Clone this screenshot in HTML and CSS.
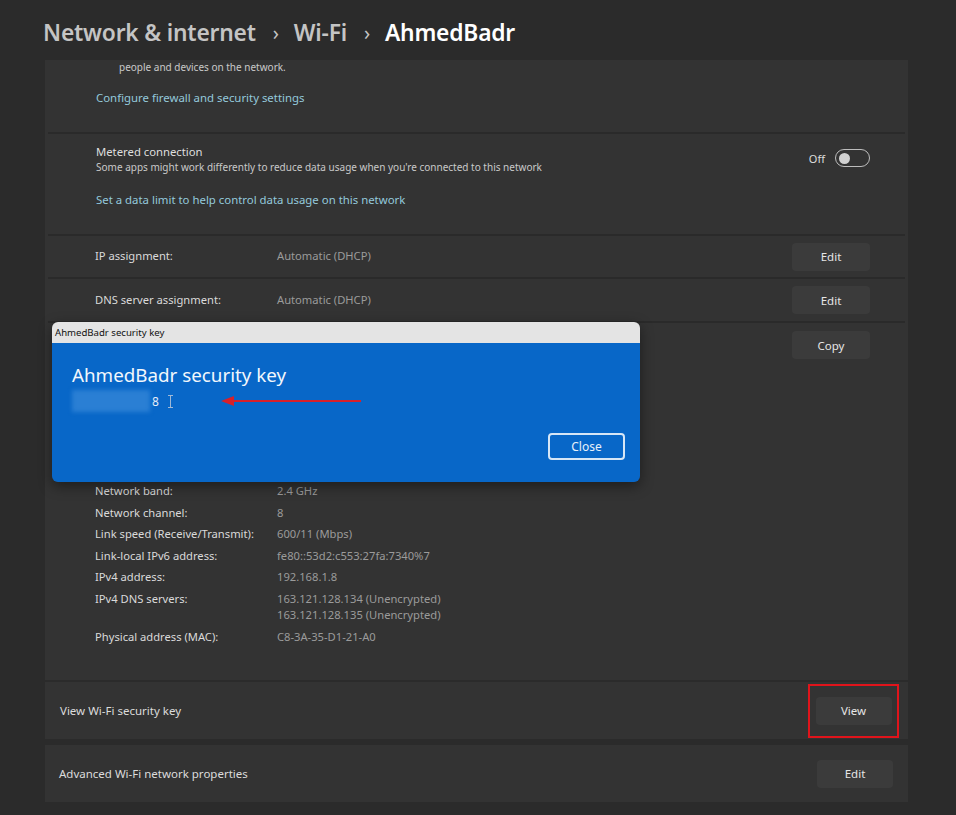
FILE: index.html
```html
<!DOCTYPE html>
<html lang="en">
<head>
<meta charset="utf-8">
<title>AhmedBadr - Wi-Fi</title>
<link rel="stylesheet" href="styles.css">
</head>
<body>
<div class="page">
  <header class="crumbs">
    <span class="crumb">Network &amp; internet</span>
    <span class="sep">›</span>
    <span class="crumb">Wi-Fi</span>
    <span class="sep">›</span>
    <span class="crumb current">AhmedBadr</span>
  </header>

  <main class="content">
    <section class="panel">
      <div class="group firewall">
        <p class="desc indent">people and devices on the network.</p>
        <a class="link">Configure firewall and security settings</a>
      </div>
      <div class="divider"></div>

      <div class="group metered">
        <div class="metered-head">
          <div class="metered-text">
            <div class="title">Metered connection</div>
            <div class="desc">Some apps might work differently to reduce data usage when you're connected to this network</div>
          </div>
          <div class="toggle-wrap">
            <span class="toggle-label">Off</span>
            <span class="toggle"><span class="knob"></span></span>
          </div>
        </div>
        <a class="link link-gap">Set a data limit to help control data usage on this network</a>
      </div>
      <div class="divider"></div>

      <div class="row row-ip">
        <span class="label">IP assignment:</span>
        <span class="value">Automatic (DHCP)</span>
        <button class="btn">Edit</button>
      </div>
      <div class="divider"></div>

      <div class="row row-dns">
        <span class="label">DNS server assignment:</span>
        <span class="value">Automatic (DHCP)</span>
        <button class="btn">Edit</button>
      </div>
      <div class="divider"></div>

      <div class="props">
        <div class="prop-head">
          <span class="label">SSID:</span>
          <span class="value">AhmedBadr</span>
          <button class="btn">Copy</button>
        </div>
        <div class="prop-list">
          <div class="prop"><span class="label">Protocol:</span><span class="value">Wi-Fi 4 (802.11n)</span></div>
          <div class="prop"><span class="label">Security type:</span><span class="value">WPA2-Personal</span></div>
          <div class="prop"><span class="label">Manufacturer:</span><span class="value">Intel Corporation</span></div>
          <div class="prop"><span class="label">Description:</span><span class="value">Intel(R) Wi-Fi 6 AX201 160MHz</span></div>
          <div class="prop"><span class="label">Driver version:</span><span class="value">22.110.1.1</span></div>
          <div class="prop"><span class="label">Network band:</span><span class="value">2.4 GHz</span></div>
          <div class="prop"><span class="label">Network channel:</span><span class="value">8</span></div>
          <div class="prop"><span class="label">Link speed (Receive/Transmit):</span><span class="value">600/11 (Mbps)</span></div>
          <div class="prop"><span class="label">Link-local IPv6 address:</span><span class="value">fe80::53d2:c553:27fa:7340%7</span></div>
          <div class="prop"><span class="label">IPv4 address:</span><span class="value">192.168.1.8</span></div>
          <div class="prop"><span class="label">IPv4 DNS servers:</span><span class="value">163.121.128.134 (Unencrypted)<br>163.121.128.135 (Unencrypted)</span></div>
          <div class="prop"><span class="label">Physical address (MAC):</span><span class="value">C8-3A-35-D1-21-A0</span></div>
        </div>
      </div>
    </section>

    <section class="card card-view">
      <span class="card-label">View Wi-Fi security key</span>
      <span class="highlight"><button class="btn btn-card">View</button></span>
    </section>

    <section class="card card-adv">
      <span class="card-label">Advanced Wi-Fi network properties</span>
      <button class="btn btn-card">Edit</button>
    </section>

    <div class="dialog">
      <div class="dialog-titlebar">AhmedBadr security key</div>
      <div class="dialog-body">
        <div class="dialog-title">AhmedBadr security key</div>
        <div class="key-line">
          <span class="key-blur"></span>
          <span class="key-char">8</span>
          <span class="ibeam"></span>
          <span class="arrow"><span class="arrow-head"></span><span class="arrow-shaft"></span></span>
        </div>
        <div class="dialog-actions">
          <button class="btn-close">Close</button>
        </div>
      </div>
    </div>
  </main>
</div>
</body>
</html>
```

FILE: styles.css
```css
* { box-sizing: border-box; }

html, body {
  margin: 0;
  padding: 0;
  background: #2b2b2b;
}

body {
  font-family: "Noto Sans", "Open Sans", sans-serif;
  color: #dcdcdc;
  width: 956px;
  height: 815px;
  overflow: hidden;
}

.crumbs {
  height: 60px;
  display: flex;
  align-items: center;
  padding-left: 43px;
  padding-top: 4px;
  font-size: 22.8px;
  font-weight: 600;
  color: #c4c4c4;
  letter-spacing: -0.2px;
}

.crumb.current { color: #ffffff; }

.sep {
  font-size: 20px;
  font-weight: 400;
  color: #c4c4c4;
  margin: 0 15px 0 17px;
}

.content {
  position: relative;
  margin-left: 45px;
  width: 863px;
}

.panel {
  background: #333333;
}

.divider {
  height: 2px;
  margin: 0 3px;
  background: #2a2a2a;
}

.desc {
  margin: 0;
  font-size: 10px;
  line-height: 14px;
  color: #c9c9c9;
  white-space: nowrap;
}

.link {
  display: block;
  font-size: 11.4px;
  line-height: 14px;
  color: #93c9dc;
  white-space: nowrap;
}

.group { padding-left: 51px; padding-right: 38px; }

.firewall {
  height: 72px;
}

.firewall .indent {
  margin-left: 23px;
}

.firewall .link { margin-top: 17px; }

.metered {
  height: 100px;
  padding-top: 10px;
}

.metered-head {
  display: flex;
  justify-content: space-between;
  align-items: flex-start;
}

.title {
  font-size: 11.3px;
  line-height: 16px;
  color: #dedede;
}

.toggle-wrap {
  display: flex;
  align-items: center;
  gap: 10px;
  margin-top: 5px;
}

.toggle-label {
  font-size: 11px;
  color: #dedede;
}

.toggle {
  width: 35px;
  height: 18px;
  border: 1px solid #bdbdbd;
  border-radius: 9px;
  display: flex;
  align-items: center;
  padding-left: 3px;
}

.knob {
  width: 11px;
  height: 11px;
  border-radius: 50%;
  background: #d0d0d0;
}

.link-gap { margin-top: 19px; }

.row, .prop-head {
  display: grid;
  grid-template-columns: 182px 1fr 78px;
  align-items: center;
  padding-left: 50px;
  padding-right: 38px;
}

.row-ip { height: 41px; }
.row-dns { height: 42px; }

.row .label, .row .value { margin-top: -2px; }

.label {
  font-size: 11.2px;
  color: #dadada;
  white-space: nowrap;
}

.value {
  font-size: 11.2px;
  color: #9b9b9b;
  white-space: nowrap;
}

.btn {
  font-family: inherit;
  height: 28px;
  width: 78px;
  border: none;
  border-radius: 4px;
  background: #3b3b3b;
  color: #e6e6e6;
  font-size: 11.5px;
  padding: 0;
}

.props {
  height: 357px;
  padding-top: 8px;
}

.prop-head { height: 28px; }

.prop-list {
  margin-top: 16px;
  padding-left: 50px;
  display: flex;
  flex-direction: column;
  gap: 5.6px;
}

.prop {
  display: grid;
  grid-template-columns: 182px 1fr;
  line-height: 16px;
}

.card {
  height: 57px;
  background: #333333;
  margin-top: 2px;
  display: flex;
  align-items: center;
  justify-content: space-between;
  padding-left: 15px;
  padding-right: 16px;
}

.card-adv {
  margin-top: 6px;
  padding-left: 14px;
  padding-right: 15px;
}

.card-label {
  font-size: 11.5px;
  color: #dcdcdc;
}

.btn-card { width: 76px; }

.highlight {
  display: flex;
  align-items: center;
  justify-content: center;
  width: 91px;
  height: 54px;
  border: 2px solid #e0141b;
  margin-right: -7px;
}

/* dialog overlay */
.dialog {
  position: absolute;
  left: 7px;
  top: 262px;
  width: 588px;
  height: 160px;
  border-radius: 6px;
  overflow: hidden;
  box-shadow: 0 4px 14px rgba(0, 0, 0, 0.45);
  display: flex;
  flex-direction: column;
}

.dialog-titlebar {
  height: 21px;
  background: #e4e4e4;
  color: #111;
  font-size: 9.6px;
  line-height: 21px;
  padding-left: 3px;
}

.dialog-body {
  flex: 1;
  background: #0867c8;
  padding: 19px 15px 0 20px;
}

.dialog-title {
  font-size: 18.8px;
  line-height: 26px;
  color: #f2f7fc;
  font-weight: 400;
}

.key-line {
  display: flex;
  align-items: center;
  height: 22px;
  margin-top: 2px;
}

.key-blur {
  width: 78px;
  height: 22px;
  background: #2a7fd4;
  filter: blur(2px);
}

.key-char {
  font-size: 12px;
  color: #e6eef8;
  margin-left: 2px;
}

.ibeam {
  width: 5px;
  height: 13px;
  margin-left: 9px;
  border-top: 1px solid #9fb8d6;
  border-bottom: 1px solid #9fb8d6;
  background: linear-gradient(#9fb8d6, #9fb8d6) center / 1px 100% no-repeat;
}

.arrow {
  display: flex;
  align-items: center;
  margin-left: 48px;
}

.arrow-head {
  width: 0;
  height: 0;
  border-top: 5px solid transparent;
  border-bottom: 5px solid transparent;
  border-right: 13px solid #d8202a;
}

.arrow-shaft {
  width: 127px;
  height: 2px;
  background: #d8202a;
}

.dialog-actions {
  display: flex;
  justify-content: flex-end;
  margin-top: 21px;
}

.btn-close {
  font-family: inherit;
  width: 77px;
  height: 27px;
  border: 2px solid #d6e6f6;
  border-radius: 4px;
  background: transparent;
  color: #e8f1fa;
  font-size: 12px;
  padding: 0;
}
```
